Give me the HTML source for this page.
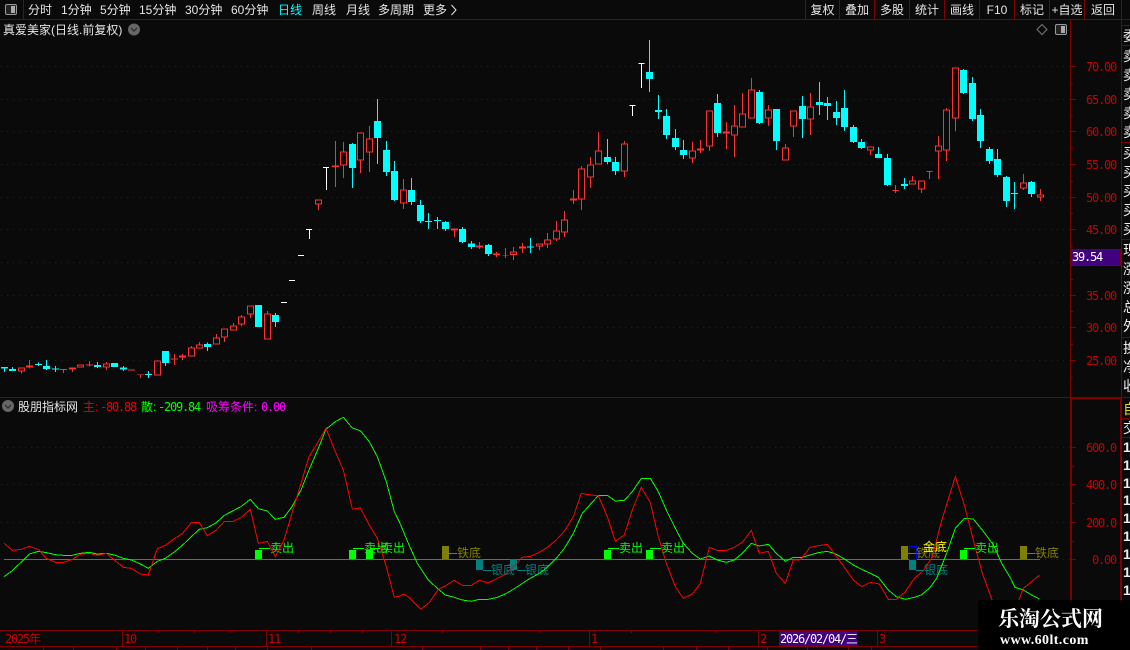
<!DOCTYPE html>
<html><head><meta charset="utf-8"><style>
html,body{margin:0;padding:0;background:#0a0a0a;width:1130px;height:650px;overflow:hidden}
svg{display:block;position:absolute;left:0;top:0}
text{font-family:"Liberation Sans","WenQuanYi Zen Hei","Noto Sans CJK SC",sans-serif;font-size:12px}
.m{font-family:"DejaVu Sans Mono","WenQuanYi Zen Hei",monospace;font-size:12px;letter-spacing:-1.22px}
.s{font-size:14px}
.b{font-size:14px;font-weight:bold}
.c{fill:#00ffff;stroke:none}
.cw{stroke:#00ffff;stroke-width:3;fill:none}
.rw{stroke:#ff3232;stroke-width:3;fill:none}
.rh{stroke:#ff3232;stroke-width:3;fill:#0a0a0a}
.rs{fill:#ff3232;stroke:none}
.w{fill:#fff;stroke:none}
.ww{stroke:#fff;stroke-width:3;fill:none}
</style></head><body>
<svg width="1130" height="650" viewBox="0 0 1130 650" xmlns="http://www.w3.org/2000/svg">
<defs><clipPath id="sb"><rect x="1122" y="0" width="8" height="650"/></clipPath></defs>
<rect width="1130" height="650" fill="#0a0a0a"/>

<!-- grid -->
<g stroke="#700000" stroke-dasharray="1 5" shape-rendering="crispEdges" fill="none">
<path d="M1 66.5H1070M1 99.5H1070M1 131.5H1070M1 164.5H1070M1 197.5H1070M1 229.5H1070M1 262.5H1070M1 295.5H1070M1 327.5H1070M1 360.5H1070"/>
<path d="M1 447.5H1070M1 484.5H1070M1 522.5H1070M1 559.5H1070"/>
</g>

<!-- frame lines -->
<g stroke="#800000" fill="none" shape-rendering="crispEdges">
<path d="M0 19.5H1130M0 397.5H1130M0 630.5H1071M0 646.5H1071"/>
<path d="M23.5 0V19M805.5 0V19M839.5 0V19M874.5 0V19M909.5 0V19M944.5 0V19M979.5 0V19M1014.5 0V19M1049.5 0V19M1084.5 0V19"/>
<path d="M1070.5 19V398M1121.5 0V398M1122 25.5H1130M1122 45.5H1130M1122 142.5H1130M1122 239.5H1130M1122 337.5H1130M1122 418.5H1130M1122 437.5H1130"/>
<path d="M1071 66.5H1076M1071 99.5H1076M1071 131.5H1076M1071 164.5H1076M1071 197.5H1076M1071 229.5H1076M1071 295.5H1076M1071 327.5H1076M1071 360.5H1076M1071 83.5H1073M1071 115.5H1073M1071 148.5H1073M1071 181.5H1073M1071 213.5H1073M1071 246.5H1073M1071 279.5H1073M1071 311.5H1073M1071 344.5H1073M1071 377.5H1073"/>
<path d="M1072 447.5H1076M1072 484.5H1076M1072 522.5H1076M1072 559.5H1076M1072 466.5H1074M1072 503.5H1074M1072 541.5H1074"/>
<path d="M122.5 631V646M266.5 631V646M391.5 631V646M589.5 631V646M758.5 631V646M877.5 631V646"/>
<path d="M158.5 630V633M194.5 630V633M230.5 630V633M298.5 630V633M330.5 630V633M362.5 630V633M442.5 630V633M540.5 630V633M631.5 630V633M716.5 630V633"/>
<path d="M43.5 647V650M73.5 647V650M116.5 647V650M145.5 647V650M177.5 647V650M207.5 647V650M235.5 647V650M267.5 647V650M311.5 647V650M422.5 647V650M480.5 647V650M508.5 647V650M536.5 647V650M568.5 647V650M600.5 647V650M663.5 647V650M696.5 647V650M728.5 647V650M767.5 647V650M807.5 647V650M848.5 647V650M871.5 647V650"/>
</g>
<path d="M1071 398H1121M1071 399H1121" stroke="#800000" shape-rendering="crispEdges"/>
<rect x="1070" y="398" width="2" height="252" fill="#800000"/>
<rect x="1120" y="398" width="2" height="252" fill="#800000"/>

<!-- toolbar -->
<g fill="#e6e6e6">
<text x="28" y="14">分时</text><text x="61" y="14">1分钟</text><text x="100" y="14">5分钟</text><text x="139" y="14">15分钟</text><text x="185" y="14">30分钟</text><text x="231" y="14">60分钟</text>
<text x="278" y="14" fill="#00ffff">日线</text><text x="312" y="14">周线</text><text x="346" y="14">月线</text><text x="378" y="14">多周期</text><text x="423" y="14">更多</text>
<g text-anchor="middle"><text x="822.5" y="14">复权</text><text x="857" y="14">叠加</text><text x="892" y="14">多股</text><text x="927" y="14">统计</text><text x="962" y="14">画线</text><text x="997" y="14">F10</text><text x="1032" y="14">标记</text><text x="1067" y="14">+自选</text><text x="1103" y="14">返回</text></g>
</g>
<path d="M451.5 5L456 10L451.5 15" stroke="#e6e6e6" fill="none"/>
<rect x="5.5" y="4.5" width="11" height="10" rx="1.5" fill="#222" stroke="#999"/><rect x="11" y="6" width="4" height="7" fill="#aaa"/>
<text x="3" y="34" fill="#e6e6e6">真爱美家(日线.前复权)</text>
<circle cx="134" cy="29.5" r="6" fill="#666"/><path d="M131 28l3 3 3-3" stroke="#222" fill="none"/>
<path d="M1042 24.5L1047 29.5L1042 34.5L1037 29.5Z" stroke="#777" fill="none"/>
<rect x="1055.5" y="24.5" width="11" height="10" rx="1.5" fill="#222" stroke="#999"/><rect x="1061" y="26" width="4" height="7" fill="#aaa"/>

<!-- candles -->
<g shape-rendering="crispEdges">
<g transform="translate(.17,90) scale(.33333)">
<path class="cw" d="M13 831V846M37 831V843M115 818V828M139 810V840M166 828V846M292 816V834M370 828V843M445 843V864M496 783V828M622 758V783M826 669V711M1057 159V294M1132 27V222M1159 153V258M1183 213V333"/>
<path class="c" d="M3 831h21V836h-21zM27 837h21V843h-21zM105 822h21V825h-21zM129 828h21V837h-21zM156 836h21V839h-21zM282 825h21V831h-21zM333 819h21V831h-21zM360 832h21V839h-21zM435 852h21V855h-21zM486 783h21V819h-21zM612 762h21V771h-21zM765 645h21V711h-21zM816 675h21V696h-21zM1047 162h21V234h-21zM1122 93h21V144h-21zM1149 180h21V246h-21zM1173 243h21V330h-21z"/>
<path class="rw" d="M64 845V851M88 810V836M190 838V849M217 838V846M268 813V829M319 816V840M421 853V864M523 792V825M547 792V810M574 768V772M598 756V763M649 732V742M673 743V756M700 699V706M724 675V708M751 674V684M802 663V670M955 344V360M1006 153V291M1030 156V264M1081 212V249M1108 108V246"/>
<path class="rh" d="M55 833.5h18V843.5h-18zM79 827.5h18V831.5h-18zM208 833.5h18V836.5h-18zM232 824.5h18V830.5h-18zM310 821.5h18V831.5h-18zM463 812.5h18V855.5h-18zM538 797.5h18V801.5h-18zM565 773.5h18V798.5h-18zM589 764.5h18V774.5h-18zM640 743.5h18V762.5h-18zM664 716.5h18V741.5h-18zM691 707.5h18V720.5h-18zM715 680.5h18V702.5h-18zM742 647.5h18V672.5h-18zM793 671.5h18V747.5h-18zM946 329.5h18V342.5h-18zM1021 185.5h18V225.5h-18zM1072 128.5h18V210.5h-18zM1099 146.5h18V186.5h-18z"/>
<path class="rs" d="M180 837h21V840h-21zM258 823h21V826h-21zM384 838h21V842h-21zM411 853h21V855h-21zM513 805h21V809h-21zM996 226h21V231h-21z"/>
<path class="w" d="M843 636h18v3h-18zM867 570h18v3h-18zM894 495h18v3h-18zM918 417h18v3h-18zM969 231h18v3h-18z"/>
<path class="ww" d="M928 418V447M979 232V300"/>
</g>
<g transform="translate(400.17,30) scale(.33333)">
<path class="cw" d="M34 444V525M61 510V579M85 549V597M112 561V597M136 573V603M187 591V639M214 633V657M265 642V678M391 624V669M622 327V402M646 381V435M748 30V186M775 195V267M799 237V327M826 297V360M850 330V387M952 192V321"/>
<path class="c" d="M24 480h21V516h-21zM51 525h21V573h-21zM75 573h21V576h-21zM102 570h21V573h-21zM126 576h21V597h-21zM177 597h21V636h-21zM204 640h21V651h-21zM255 645h21V672h-21zM381 649h21V653h-21zM612 381h21V396h-21zM636 396h21V423h-21zM738 126h21V147h-21zM765 240h21V246h-21zM789 258h21V315h-21zM816 324h21V351h-21zM840 360h21V375h-21zM942 219h21V309h-21z"/>
<path class="rw" d="M10 447V537M163 602V621M238 636V657M289 666V681M316 654V684M340 651V690M367 639V669M418 650V660M442 609V654M469 573V633M493 543V621M520 480V522M544 408V540M571 381V474M595 306V361M673 333V441M877 336V399M901 330V369M928 350V363M979 276V357"/>
<path class="rh" d="M1 479.5h18V519.5h-18zM154 596.5h18V600.5h-18zM229 647.5h18V651.5h-18zM331 665.5h18V673.5h-18zM358 650.5h18V654.5h-18zM409 641.5h18V648.5h-18zM433 629.5h18V642.5h-18zM460 602.5h18V627.5h-18zM484 569.5h18V606.5h-18zM511 506.5h18V510.5h-18zM535 416.5h18V507.5h-18zM562 404.5h18V441.5h-18zM586 362.5h18V402.5h-18zM664 341.5h18V423.5h-18zM868 362.5h18V384.5h-18zM892 356.5h18V360.5h-18zM919 242.5h18V348.5h-18zM970 305.5h18V309.5h-18z"/>
<path class="rs" d="M279 670h21V675h-21zM307 676h18V678h-18z"/>
<path class="w" d="M688 225h18v3h-18zM715 99h18v3h-18z"/>
<path class="ww" d="M697 226V258M724 100V174"/>
</g>
<g transform="translate(730.17,50) scale(.33333)">
<path class="cw" d="M88 120V222M139 273V300M217 138V264M268 96V195M292 141V210M319 153V225M343 120V243M370 225V279M394 267V297M445 291V324M472 312V408M523 384V417M700 57V132M727 81V213M751 177V294M778 291V342M802 297V381M829 378V471M853 396V477M904 393V441"/>
<path class="c" d="M78 126h21V219h-21zM129 177h21V273h-21zM207 168h21V207h-21zM258 156h21V165h-21zM282 159h21V168h-21zM309 186h21V204h-21zM333 174h21V231h-21zM360 231h21V276h-21zM384 276h21V294h-21zM435 312h21V324h-21zM462 324h21V405h-21zM513 402h21V408h-21zM690 60h21V129h-21zM717 99h21V207h-21zM741 195h21V273h-21zM768 297h21V333h-21zM792 327h21V375h-21zM819 381h21V453h-21zM843 429h21V432h-21zM894 396h21V432h-21z"/>
<path class="rw" d="M13 165V321M37 129V190M64 84V118M115 165V228M166 282V292M190 230V261M241 129V255M421 302V315M496 405V429M547 378V391M574 419V429M598 363V387M625 258V387M649 174V333M676 206V243M880 372V420M931 417V453"/>
<path class="rh" d="M4 227.5h18V255.5h-18zM28 191.5h18V231.5h-18zM55 119.5h18V204.5h-18zM106 179.5h18V204.5h-18zM157 293.5h18V330.5h-18zM181 182.5h18V228.5h-18zM232 170.5h18V207.5h-18zM412 290.5h18V300.5h-18zM538 392.5h18V402.5h-18zM565 392.5h18V417.5h-18zM616 287.5h18V303.5h-18zM640 179.5h18V300.5h-18zM667 53.5h18V204.5h-18zM871 398.5h18V414.5h-18zM922 434.5h18V441.5h-18z"/>
<path class="rs" d="M487 420h18V423h-18zM589 363h18v3h-18z"/>
</g>
</g>

<!-- axis labels -->
<g fill="#c80000" text-anchor="end">
<text class="m" x="1116" y="71">70.00</text><text class="m" x="1116" y="104">65.00</text><text class="m" x="1116" y="136">60.00</text><text class="m" x="1116" y="169">55.00</text><text class="m" x="1116" y="202">50.00</text><text class="m" x="1116" y="234">45.00</text><text class="m" x="1116" y="300">35.00</text><text class="m" x="1116" y="332">30.00</text><text class="m" x="1116" y="365">25.00</text>
<text class="m" x="1116" y="452">600.0</text><text class="m" x="1116" y="489">400.0</text><text class="m" x="1116" y="527">200.0</text><text class="m" x="1116" y="564">0.00</text>
</g>
<rect x="1070.5" y="249.5" width="50" height="16" fill="#400080" stroke="#800000"/>
<text class="m" x="1072" y="261" fill="#fff">39.54</text>

<!-- sidebar -->
<g clip-path="url(#sb)" fill="#eee">
<text class="s" x="1123" y="41">委</text>
<text class="s" x="1123" y="61">卖</text><text class="s" x="1123" y="80">卖</text><text class="s" x="1123" y="99">卖</text><text class="s" x="1123" y="118">卖</text><text class="s" x="1123" y="137">卖</text>
<text class="s" x="1123" y="158">买</text><text class="s" x="1123" y="177">买</text><text class="s" x="1123" y="196">买</text><text class="s" x="1123" y="215">买</text><text class="s" x="1123" y="234">买</text>
<text class="s" x="1123" y="255">现</text><text class="s" x="1123" y="274">涨</text><text class="s" x="1123" y="293">涨</text><text class="s" x="1123" y="312">总</text><text class="s" x="1123" y="331">外</text>
<text class="s" x="1123" y="353">换</text><text class="s" x="1123" y="372">净</text><text class="s" x="1123" y="391">收</text>
<text class="s" x="1123" y="414" fill="#e0e000">自</text><text class="s" x="1123" y="433">交</text>
<text class="b" x="1123" y="452">1</text><text class="b" x="1123" y="470">1</text><text class="b" x="1123" y="488">1</text><text class="b" x="1123" y="505">1</text><text class="b" x="1123" y="523">1</text><text class="b" x="1123" y="541">1</text><text class="b" x="1123" y="559">1</text><text class="b" x="1123" y="577">1</text><text class="b" x="1123" y="595">1</text><text class="b" x="1123" y="612">1</text><text class="b" x="1123" y="630">1</text><text class="b" x="1123" y="648">1</text>
</g>

<!-- indicator header -->
<circle cx="8" cy="406" r="6" fill="#666"/><path d="M5 405l3 3 3-3" stroke="#222" fill="none"/>
<text x="18" y="411" fill="#e6e6e6">股朋指标网</text>
<text x="83" y="411" fill="#f00000">主:</text><text class="m" x="100" y="411" fill="#f00000">-80.88</text>
<text x="141" y="411" fill="#00ff00">散:</text><text class="m" x="158" y="411" fill="#00ff00">-209.84</text>
<text x="206" y="411" fill="#ff00ff">吸筹条件:</text><text class="m" x="261" y="411" fill="#ff00ff">0.00</text>

<!-- zero line -->
<path d="M4 559.5H1040" stroke="#ff00ff" shape-rendering="crispEdges"/>

<!-- signals -->
<g shape-rendering="crispEdges">
<path fill="#00ff00" d="M255 550h7v9h-7zM349 550h7v9h-7zM366 550h7v9h-7zM604 550h7v9h-7zM646 550h7v9h-7zM960 550h7v9h-7z"/>
<path fill="#808000" d="M442 546h7v13h-7zM901 546h7v13h-7zM1020 546h7v13h-7z"/>
<path fill="#008080" d="M476 559h7v11h-7zM510 559h7v11h-7zM909 559h7v11h-7z"/>
<rect x="909.5" y="546.5" width="7" height="13" fill="none" stroke="#0000ff"/>
<path stroke="#00ff00" fill="none" d="M259 548.5H270M353 548.5H364M370 548.5H381M608 548.5H619M650 548.5H661M964 548.5H975"/>
<path stroke="#808000" fill="none" d="M449 553.5H457M908 553.5H916M1027 553.5H1035"/>
<path stroke="#008080" fill="none" d="M483 570.5H491M517 570.5H525M916 570.5H924"/>
</g>
<g fill="#00ff00"><text x="270" y="552">卖出</text><text x="364" y="552">卖出</text><text x="381" y="552">卖出</text><text x="619" y="552">卖出</text><text x="661" y="552">卖出</text><text x="975" y="552">卖出</text></g>
<g fill="#808000"><text x="457" y="557">铁底</text><text x="916" y="557">铁底</text><text x="1035" y="557">铁底</text></g>
<g fill="#008080"><text x="491" y="574">银底</text><text x="525" y="574">银底</text><text x="924" y="574">银底</text></g>
<text x="923" y="551" fill="#ffff00">金底</text>

<!-- indicator lines -->
<g fill="none" stroke-width="3" shape-rendering="crispEdges">
<g transform="translate(0,390) scale(.33333)">
<polyline stroke="#00ff00" points="12,560 37,542 64,516 88,492 115,484 139,488 166,494 190,496 217,496 241,490 268,487 292,492 319,490 343,495 370,505 394,510 421,522 445,535 472,514 496,505 523,486 547,466 574,440 598,418 622,413 649,398 673,376 700,362 724,349 751,328 775,356 802,363 826,388 852,382 876,350 903,300 927,240 955,175 978,118 1006,95 1030,82 1057,114 1081,122 1108,155 1132,200 1159,275 1183,365 1200,400"/>
<polyline stroke="#ff0000" points="12,460 37,481 64,478 88,469 115,478 139,505 166,517 190,517 217,508 241,493 268,490 292,496 319,490 343,510 370,532 394,535 421,552 445,555 472,476 496,466 523,446 547,431 574,398 598,398 622,437 649,420 673,394 700,394 724,382 751,358 775,460 802,454 826,500 852,450 876,370 903,280 927,200 955,155 978,115 1006,185 1030,240 1057,357 1081,354 1108,405 1132,445 1159,530 1183,622 1200,618"/>
</g>
<g transform="translate(400,390) scale(.33333)">
<polyline stroke="#00ff00" points="0,400 25,460 52,520 85,570 112,595 136,615 163,622 187,630 214,634 238,628 265,628 292,622 316,612 340,598 367,580 391,565 418,550 442,532 469,505 493,475 520,430 547,370 571,343 595,317 622,316 646,333 673,331 697,305 724,265 751,265 775,305 799,360 826,415 850,460 877,490 901,507 928,498 952,510 979,517 1003,510 1027,490 1054,460 1078,468 1105,463 1129,490 1156,514 1180,502 1200,502"/>
<polyline stroke="#ff0000" points="0,618 10,612 25,620 62,658 88,638 115,598 136,588 163,571 187,586 214,586 238,571 265,579 292,565 316,553 340,530 367,502 391,499 418,487 442,472 469,450 493,424 520,380 544,310 571,315 595,317 622,380 646,454 673,435 697,360 724,292 751,338 775,440 799,520 826,590 850,625 877,612 901,580 928,472 952,481 979,481 1003,472 1027,457 1054,421 1078,490 1105,484 1129,550 1156,580 1180,510 1200,510"/>
</g>
<g transform="translate(760,450) scale(.33333)">
<polyline stroke="#00ff00" points="120,323 125,323 150,315 175,308 202,304 227,312 250,325 280,345 305,358 331,370 355,382 385,420 409,440 436,448 463,442 484,435 510,413 530,385 560,310 586,235 613,205 640,207 667,240 700,285 725,340 752,385 765,412 790,420 815,435 838,447"/>
<polyline stroke="#ff0000" points="120,328 125,325 150,292 175,287 202,283 241,335 280,390 305,410 331,397 358,402 385,448 409,448 436,425 463,385 490,362 517,320 544,215 586,80 613,165 640,270 667,370 700,460 730,560 750,520 790,415 838,376"/>
</g>
</g>

<!-- date axis -->
<text class="m" x="5" y="643" fill="#c80000">2025年</text>
<text class="m" x="124" y="643" fill="#c80000">10</text>
<text class="m" x="268" y="643" fill="#c80000">11</text>
<text class="m" x="394" y="643" fill="#c80000">12</text>
<text class="m" x="591" y="643" fill="#c80000">1</text>
<text class="m" x="760" y="643" fill="#c80000">2</text>
<rect x="779" y="631" width="78" height="15" fill="#400080"/>
<text class="m" x="780" y="643" fill="#fff">2026/02/04/三</text>
<text class="m" x="879" y="643" fill="#c80000">3</text>

<!-- watermark -->
<rect x="978" y="600" width="152" height="50" fill="#000"/>
<text x="998" y="626" style="font-family:'Noto Serif CJK SC','Liberation Serif',serif;font-size:21px;font-weight:bold" fill="#fff">乐淘公式网</text>
<text x="1000" y="644" style="font-family:'Liberation Serif',serif;font-size:14px;font-weight:bold;letter-spacing:.4px" fill="#fff">www.60lt.com</text>
</svg>
</body></html>
